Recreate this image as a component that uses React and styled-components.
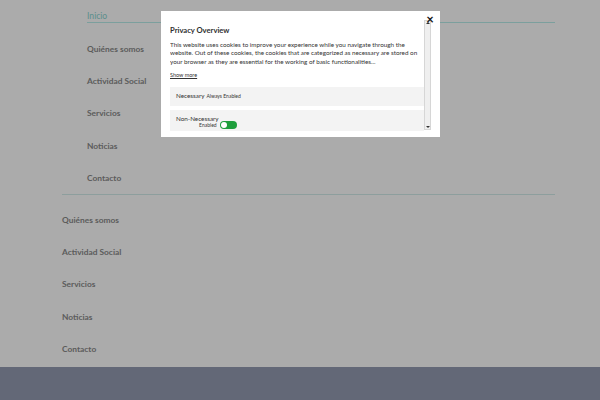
import React from 'react';
import styled, { createGlobalStyle } from 'styled-components';

const GlobalStyle = createGlobalStyle`
  html, body {
    margin: 0;
    padding: 0;
    background: #ffffff;
    font-family: Lato, "Noto Sans", sans-serif;
    overflow: hidden;
  }
  ul { margin: 0; padding: 0; list-style: none; }
`;

const Page = styled.div`
  width: 600px;
  height: 400px;
  display: flex;
  flex-direction: column;
  background: #ffffff;
`;

const Nav = styled.nav`
  flex: 1;
  margin-left: 62px;
  width: 493px;
`;

const SubMenu = styled.ul`
  padding-left: 25px;
  border-bottom: 1px solid #d2ecea;
`;

const MainMenu = styled.ul`
  padding-top: 8px;
`;

const Item = styled.li`
  height: 32.4px;
  display: flex;
  align-items: ${p => (p.$current ? 'flex-start' : 'center')};
  font-size: 8.4px;
  font-weight: 700;
  color: ${p => (p.$current ? '#8ad6d2' : '#8a8a8a')};
`;

const CurrentLink = styled.a`
  display: block;
  width: 100%;
  padding-top: 10px;
  line-height: 12px;
  font-size: 8.6px;
  font-weight: 400;
  color: inherit;
  text-decoration: none;
  border-bottom: 1px solid #b8eeea;
`;

const Footer = styled.footer`
  height: 35px;
  border-top: 2px solid #ffffff;
  background: #949bb2;
`;

const Backdrop = styled.div`
  position: fixed;
  inset: 0;
  background: rgba(0, 0, 0, 0.33);
`;

const Modal = styled.div`
  position: fixed;
  left: 161px;
  top: 11px;
  width: 279px;
  height: 126px;
  box-sizing: border-box;
  padding: 8px 9px 6px 9px;
  background: #ffffff;
  display: flex;
  color: #333333;
  font-family: Lato, "Noto Sans", sans-serif;
`;

const Close = styled.span`
  position: absolute;
  top: 3px;
  right: 5px;
  width: 10px;
  height: 10px;
  line-height: 10px;
  text-align: center;
  font-size: 13px;
  font-weight: 700;
  color: #111;
  z-index: 2;
`;

const Content = styled.div`
  flex: 1;
  overflow: hidden;
`;

const Title = styled.h4`
  margin: 5px 0 0;
  font-size: 7.6px;
  line-height: 12px;
  font-weight: 700;
  color: #2f2f2f;
`;

const Text = styled.p`
  margin: 4.75px 0 0;
  padding-right: 2px;
  font-size: 6.3px;
  line-height: 8.5px;
  color: #333;
`;

const ShowMore = styled.a`
  display: block;
  width: fit-content;
  margin-top: 4.5px;
  font-size: 5.5px;
  line-height: 8px;
  color: #333;
  text-decoration: underline;
`;

const Category = styled.div`
  margin-top: ${p => p.$first ? '8px' : '4px'};
  height: ${p => p.$tall ? '24px' : '19px'};
  box-sizing: border-box;
  padding: ${p => p.$tall ? '5px 6px 0' : '0 6px'};
  background: #f3f3f3;
  display: flex;
  align-items: ${p => p.$tall ? 'flex-start' : 'center'};
  font-size: 6.3px;
  color: #333;
`;

const Label = styled.span`
  line-height: 8px;
`;

const Small = styled.span`
  font-size: 5px;
  margin-left: 2px;
`;

const LabelStack = styled.div`
  display: flex;
  flex-direction: column;
  align-items: flex-end;
  line-height: 7px;
`;

const EnabledText = styled.span`
  font-size: 5px;
  line-height: 6px;
  margin-right: 2px;
`;

const Toggle = styled.span`
  flex: none;
  margin: 6px 0 0 1px;
  width: 17px;
  height: 8px;
  border-radius: 4px;
  background: #1e9e3c;
  position: relative;
  &::after {
    content: '';
    position: absolute;
    left: 1px;
    top: 1px;
    width: 6px;
    height: 6px;
    border-radius: 50%;
    background: #ffffff;
  }
`;

const Scrollbar = styled.div`
  width: 7px;
  margin: 1px 0;
  box-sizing: border-box;
  border: 1px solid #d6d6d6;
  background: #efefef;
  display: flex;
  flex-direction: column;
  justify-content: space-between;
  align-items: center;
`;

const Arrow = styled.span`
  width: 0;
  height: 0;
  margin: 1px 0;
  border-left: 2px solid transparent;
  border-right: 2px solid transparent;
  ${p => p.$down
    ? 'border-top: 2px solid #333;'
    : 'border-bottom: 2px solid #333;'}
`;

const sub = ['Quiénes somos', 'Actividad Social', 'Servicios', 'Noticias', 'Contacto'];

export default function App() {
  return (
    <>
      <GlobalStyle />
      <Page>
        <Nav>
          <SubMenu>
            <Item $current><CurrentLink href="#">Inicio</CurrentLink></Item>
            {sub.map(s => <Item key={s}>{s}</Item>)}
          </SubMenu>
          <MainMenu>
            {sub.map(s => <Item key={s}>{s}</Item>)}
          </MainMenu>
        </Nav>
        <Footer />
      </Page>
      <Backdrop />
      <Modal>
        <Close>×</Close>
        <Content>
          <Title>Privacy Overview</Title>
          <Text>
            This website uses cookies to improve your experience while you navigate through the
            website. Out of these cookies, the cookies that are categorized as necessary are stored on
            your browser as they are essential for the working of basic functionalities...
          </Text>
          <ShowMore href="#">Show more</ShowMore>
          <Category $first>
            <Label>Necessary<Small>Always Enabled</Small></Label>
          </Category>
          <Category $tall>
            <LabelStack>
              <span>Non-Necessary</span>
              <EnabledText>Enabled</EnabledText>
            </LabelStack>
            <Toggle />
          </Category>
        </Content>
        <Scrollbar>
          <Arrow />
          <Arrow $down />
        </Scrollbar>
      </Modal>
    </>
  );
}
